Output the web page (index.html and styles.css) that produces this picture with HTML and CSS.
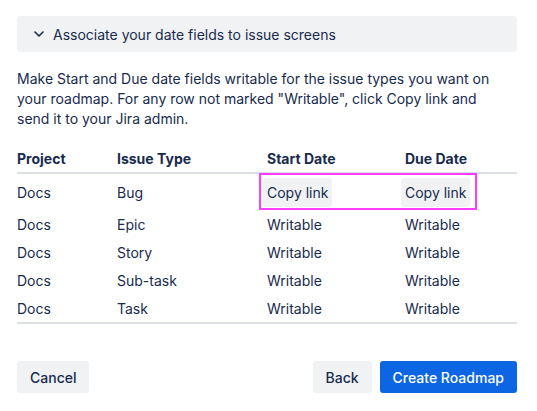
FILE: index.html
```html
<!DOCTYPE html>
<html lang="en">
<head>
<meta charset="utf-8">
<link rel="stylesheet" href="styles.css">
</head>
<body>
<div class="page">
  <div class="accordion">
    <svg class="chev" width="10" height="6" viewBox="0 0 10 6"><path d="M1 1 L5 5 L9 1" fill="none" stroke="#172b4d" stroke-width="1.6" stroke-linecap="round" stroke-linejoin="round"/></svg>
    <span>Associate your date fields to issue screens</span>
  </div>
  <p class="desc">Make Start and Due date fields writable for the issue types you want on your roadmap. For any row not marked "Writable", click Copy link and send it to your Jira admin.</p>
  <div class="table">
    <div class="row head"><div>Project</div><div>Issue Type</div><div>Start Date</div><div>Due Date</div></div>
    <div class="row first"><div>Docs</div><div>Bug</div><div><button class="link">Copy link</button></div><div><button class="link">Copy link</button></div></div>
    <div class="row"><div>Docs</div><div>Epic</div><div>Writable</div><div>Writable</div></div>
    <div class="row"><div>Docs</div><div>Story</div><div>Writable</div><div>Writable</div></div>
    <div class="row"><div>Docs</div><div>Sub-task</div><div>Writable</div><div>Writable</div></div>
    <div class="row last"><div>Docs</div><div>Task</div><div>Writable</div><div>Writable</div></div>
    <div class="highlight"></div>
  </div>
  <div class="footer">
    <button class="btn">Cancel</button>
    <div class="right">
      <button class="btn">Back</button>
      <button class="btn primary">Create Roadmap</button>
    </div>
  </div>
</div>
</body>
</html>
```
FILE: styles.css
```css
* { box-sizing: border-box; }
body {
  margin: 0;
  background: #fff;
  font-family: Inter, "Noto Sans", sans-serif;
  font-size: 14px;
  color: #172b4d;
}
.page {
  padding: 16px 20px 0 17px;
  width: 537px;
}
.accordion {
  height: 36px;
  background: #f1f2f4;
  border-radius: 4px;
  display: flex;
  align-items: center;
  padding-left: 17px;
  gap: 9px;
}
.chev { flex: none; }
.desc {
  margin: 17px 0 0;
  max-width: 494px;
  line-height: 20px;
}
.table {
  position: relative;
  margin-top: 15px;
}
.row {
  display: grid;
  grid-template-columns: 100px 150px 138px 1fr;
  align-items: center;
  height: 28px;
}
.row.head {
  font-weight: 700;
  height: 30px;
  border-bottom: 2px solid #dcdfe4;
}
.row.first { height: 36px; }
.row.last {
  height: 30px;
  border-bottom: 2px solid #dcdfe4;
}
.link {
  font: inherit;
  color: inherit;
  background: #f1f2f4;
  border: none;
  border-radius: 3px;
  height: 29px;
  padding: 0 4px;
  margin-left: -4px;
}
.highlight {
  position: absolute;
  left: 242px;
  top: 29px;
  width: 218px;
  height: 37px;
  border: 2px solid #ff3dff;
  pointer-events: none;
}
.footer {
  margin-top: 37px;
  display: flex;
  justify-content: space-between;
}
.right { display: flex; gap: 8px; }
.btn {
  font: inherit;
  font-weight: 500;
  color: #172b4d;
  background: #f1f2f4;
  border: none;
  border-radius: 3px;
  height: 32px;
  padding: 0 13px;
}
.btn.primary {
  background: #0c66e4;
  color: #fff;
}
```
